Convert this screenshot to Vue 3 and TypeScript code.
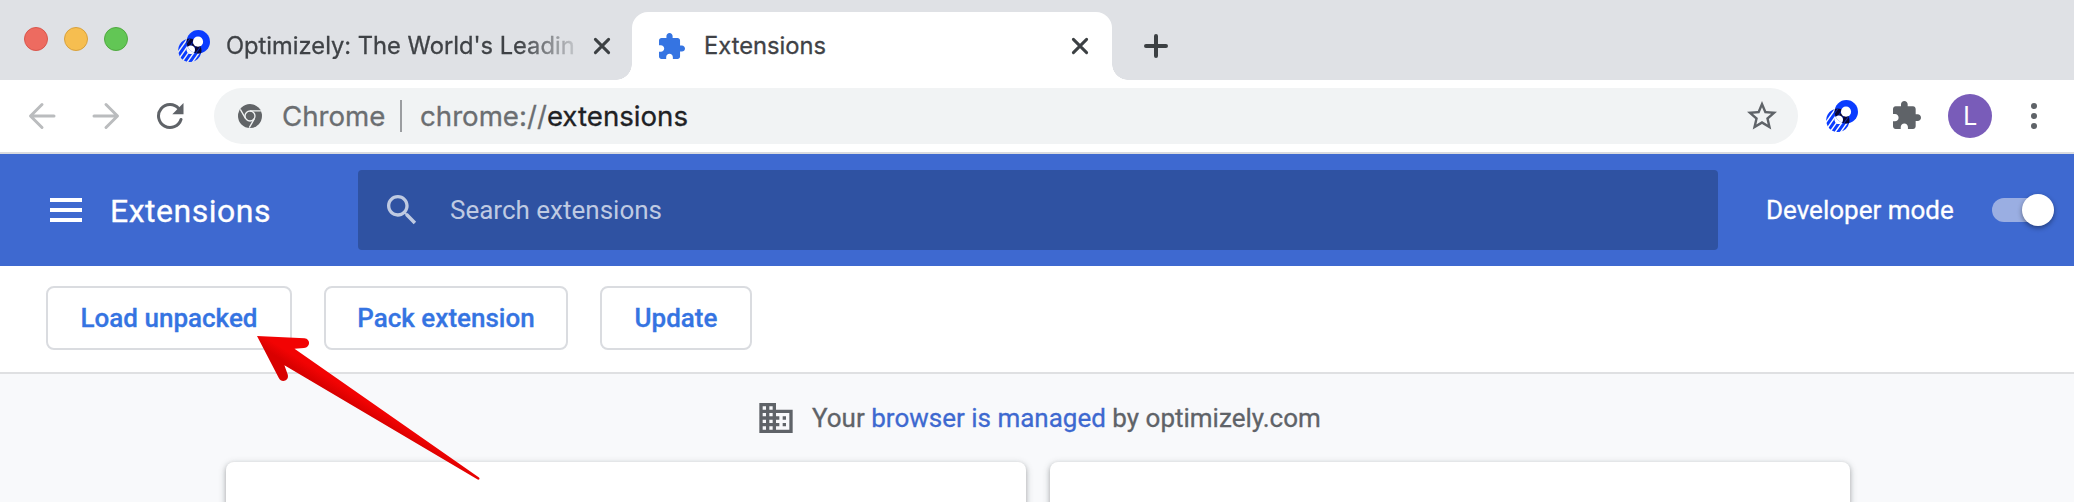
<script setup lang="ts">
import { h, type FunctionalComponent } from 'vue'

const puzzlePath =
  'M20.5 11H19V7c0-1.1-.9-2-2-2h-4V3.5C13 2.12 11.88 1 10.5 1S8 2.12 8 3.5V5H4c-1.1 0-1.99.9-1.99 2v3.8H3.5c1.49 0 2.7 1.21 2.7 2.7s-1.21 2.7-2.7 2.7H2V20c0 1.1.9 2 2 2h3.8v-1.5c0-1.49 1.21-2.7 2.7-2.7 1.49 0 2.7 1.21 2.7 2.7V22H17c1.1 0 2-.9 2-2v-4h1.5c1.38 0 2.5-1.12 2.5-2.5S21.88 11 20.5 11z'

const stripes = [-9, -4.6, -0.2, 4.2, 8.6, 13, 17.4, 21.8]

// Comet logo: a solid ring over a diagonally striped one
const CometLogo: FunctionalComponent<{ uid: string }> = ({ uid }) =>
  h('svg', { width: 32, height: 32, viewBox: '0 0 32 32' }, [
    h('defs', [
      h('clipPath', { id: `${uid}-tail` }, [
        h('path', {
          'clip-rule': 'evenodd',
          d: 'M11.8 8.6a11.7 11.7 0 1 0 .01 0zM12.8 15.6a4.2 4.2 0 1 1-.01 0z',
        }),
      ]),
      h('clipPath', { id: `${uid}-head` }, [h('circle', { cx: 20.3, cy: 11.7, r: 11.7 })]),
    ]),
    h('g', { 'clip-path': `url(#${uid}-tail)` }, [
      h('rect', { width: 32, height: 32, fill: '#fff', opacity: 0.55 }),
      h('g', { transform: 'rotate(35 12 20)' }, stripes.map((x) =>
        h('rect', { x, y: -6, width: 3, height: 50, fill: '#0a3cff' }))),
    ]),
    h('circle', { cx: 12.8, cy: 19.8, r: 4.2, fill: '#fff', opacity: 0.7 }),
    h('circle', { cx: 20.3, cy: 11.7, r: 11.7, fill: '#0a3cff' }),
    h('g', { 'clip-path': `url(#${uid}-head)` }, [
      h('g', { 'clip-path': `url(#${uid}-tail)` }, [
        h('rect', { width: 32, height: 32, fill: '#080736' }),
        h('g', { transform: 'rotate(35 12 20)' }, stripes.map((x) =>
          h('rect', { x: x + 0.8, y: -6, width: 0.9, height: 50, fill: '#0b2bc0' }))),
      ]),
      h('circle', { cx: 12.8, cy: 19.8, r: 4.2, fill: '#fff' }),
    ]),
    h('circle', { cx: 20, cy: 11.7, r: 5.1, fill: '#fff' }),
  ])
CometLogo.props = ['uid']

const lights = ['red', 'yellow', 'green']
const actions = [
  { label: 'Load unpacked', cls: 'load' },
  { label: 'Pack extension', cls: 'pack' },
  { label: 'Update', cls: 'update' },
]
</script>

<template>
  <div class="window">
    <div class="tabstrip">
      <div class="lights"><span v-for="c in lights" :key="c" class="light" :class="c" /></div>
      <div class="tab inactive">
        <CometLogo uid="tab" />
        <span class="tab-title faded">Optimizely: The World's Leadin</span>
        <svg class="close" width="20" height="20" viewBox="0 0 20 20"><path d="M3.4 3.4l13.2 13.2M16.6 3.4L3.4 16.6" /></svg>
      </div>
      <div class="tab active">
        <svg class="tab-puzzle" width="26" height="26" viewBox="2 1 21 21"><path :d="puzzlePath" /></svg>
        <span class="tab-title">Extensions</span>
        <svg class="close" width="20" height="20" viewBox="0 0 20 20"><path d="M3.4 3.4l13.2 13.2M16.6 3.4L3.4 16.6" /></svg>
      </div>
      <svg class="plus" width="24" height="24" viewBox="0 0 24 24"><path d="M12 2v20M2 12h20" /></svg>
    </div>

    <div class="toolbar">
      <svg class="nav back" width="28" height="28" viewBox="0 0 28 28"><path d="M26 14H3M14 2.5L2.5 14 14 25.5" /></svg>
      <svg class="nav forward" width="28" height="28" viewBox="0 0 28 28"><path d="M2 14h23M14 2.5L25.5 14 14 25.5" /></svg>
      <svg class="reload" width="28" height="28" viewBox="0 0 28 28">
        <path class="arc" d="M25 17.5A11.5 11.5 0 1 1 22.8 6.6" />
        <path class="head" d="M27.5 1v11.2H16.3z" />
      </svg>
      <div class="omnibox">
        <svg class="chrome-icon" width="24" height="24" viewBox="0 0 24 24">
          <circle cx="12" cy="12" r="12" fill="#616467" />
          <circle cx="12" cy="12" r="5" fill="none" stroke="#f1f3f4" stroke-width="1.3" />
          <path d="M12 6.9h10.9M7.6 14.6L2.3 5.4M16.4 14.6L11.3 23.6" stroke="#f1f3f4" stroke-width="1.3" fill="none" />
        </svg>
        <span class="scheme-name">Chrome</span>
        <span class="sep" />
        <span class="url">chrome://<b>extensions</b></span>
        <svg class="star" width="36" height="36" viewBox="0 0 24 24"><path d="M22 9.24l-7.19-.62L12 2 9.19 8.63 2 9.24l5.46 4.73L5.82 21 12 17.27 18.18 21l-1.63-7.03L22 9.24zM12 15.4l-3.76 2.27 1-4.28-3.32-2.88 4.38-.38L12 6.1l1.71 4.04 4.38.38-3.32 2.88 1 4.28L12 15.4z" /></svg>
      </div>
      <CometLogo uid="bar" />
      <svg class="bar-puzzle" width="28" height="28" viewBox="2 1 21 21"><path :d="puzzlePath" /></svg>
      <span class="avatar">L</span>
      <svg class="dots" width="6" height="26" viewBox="0 0 6 26"><circle cx="3" cy="3" r="3" /><circle cx="3" cy="13" r="3" /><circle cx="3" cy="23" r="3" /></svg>
    </div>

    <header class="header">
      <svg class="menu" width="32" height="24" viewBox="0 0 32 24"><path d="M0 0h32v4H0zM0 10h32v4H0zM0 20h32v4H0z" /></svg>
      <h1>Extensions</h1>
      <div class="search">
        <svg width="40" height="40" viewBox="0 0 24 24"><path d="M15.5 14h-.79l-.28-.27C15.41 12.59 16 11.11 16 9.5 16 5.91 13.09 3 9.5 3S3 5.91 3 9.5 5.91 16 9.5 16c1.61 0 3.09-.59 4.23-1.57l.27.28v.79l5 4.99L20.49 19l-4.99-5zm-6 0C7.01 14 5 11.99 5 9.5S7.01 5 9.5 5 14 7.01 14 9.5 11.99 14 9.5 14z" /></svg>
        <span>Search extensions</span>
      </div>
      <span class="dev">Developer mode</span>
      <span class="toggle"><span class="knob" /></span>
    </header>

    <div class="actions">
      <button v-for="a in actions" :key="a.label" :class="a.cls"><span>{{ a.label }}</span></button>
      <svg class="pointer" width="240" height="160" viewBox="250 330 240 160">
        <defs>
          <linearGradient id="arrow-fill" gradientUnits="userSpaceOnUse" x1="325" y1="389" x2="332" y2="378">
            <stop offset="0.1" stop-color="#d90000" /><stop offset="0.9" stop-color="#f20303" />
          </linearGradient>
        </defs>
        <path fill="url(#arrow-fill)" d="M257 336l47.5 2.3c6.2.4 6.2 9.3-.5 9.7l-9.5.8L479 477.6c1.2 1.2.2 2.6-1.3 2L284.4 365.3l3.4 9.5c1.4 6.6-6.7 8.3-9 3.2z" />
      </svg>
    </div>

    <main>
      <div class="managed">
        <svg width="40" height="40" viewBox="0 0 24 24"><path d="M12 7V3H2v18h20V7H12zM6 19H4v-2h2v2zm0-4H4v-2h2v2zm0-4H4V9h2v2zm0-4H4V5h2v2zm4 12H8v-2h2v2zm0-4H8v-2h2v2zm0-4H8V9h2v2zm0-4H8V5h2v2zm10 12h-8v-2h2v-2h-2v-2h2v-2h-2V9h8v10zm-2-8h-2v2h2v-2zm0 4h-2v2h2v-2z" /></svg>
        <span>Your <a>browser is managed</a> by optimizely.com</span>
      </div>
      <div class="cards"><div class="card" /><div class="card" /></div>
    </main>
  </div>
</template>

<style>
html, body { margin: 0; overflow: hidden; }
</style>

<style scoped>
* { box-sizing: border-box; }
svg { display: block; flex: none; }
.window { width: 2074px; height: 502px; overflow: hidden; background: #f8f9fb; font-family: Roboto, "Liberation Sans", sans-serif; white-space: nowrap; -webkit-text-stroke: 0.3px currentColor; }
.tabstrip { display: flex; height: 80px; background: #dfe1e5; }
.lights { display: flex; gap: 16px; padding: 27px 0 0 24px; width: 162px; flex: none; }
.light { width: 24px; height: 24px; border-radius: 50%; border: 1px solid; }
.red { background: #ed6b60; border-color: #d9564c; }
.yellow { background: #f6be50; border-color: #d8a13d; }
.green { background: #62c655; border-color: #50a940; }
.tab { display: flex; align-items: center; height: 68px; margin-top: 12px; flex: none; position: relative; }
.inactive { width: 470px; padding-left: 16px; }
.active { width: 480px; padding-left: 27px; background: #fff; border-radius: 16px 16px 0 0; }
.active::before, .active::after { content: ''; position: absolute; bottom: 0; width: 16px; height: 16px; }
.active::before { left: -16px; background: radial-gradient(circle at 0 0, transparent 15.5px, #fff 16px); }
.active::after { right: -16px; background: radial-gradient(circle at 100% 0, transparent 15.5px, #fff 16px); }
.tab-title { font-family: Inter, "Liberation Sans", sans-serif; font-size: 23.7px; line-height: 30px; color: #3f4246; margin-left: 16px; width: 350px; overflow: hidden; }
.active .tab-title { margin-left: 19px; width: 366px; }
.faded { -webkit-mask-image: linear-gradient(90deg, #000 84%, transparent 103%); mask-image: linear-gradient(90deg, #000 84%, transparent 103%); }
.close { margin-left: auto; margin-right: 20px; fill: none; stroke: #3c4043; stroke-width: 3; stroke-linecap: round; }
.active .close { margin-right: 22px; }
.tab-puzzle { fill: #3574e2; }
.plus { margin: 34px 0 0 32px; fill: none; stroke: #3c4043; stroke-width: 4; stroke-linecap: round; }
.toolbar { display: flex; align-items: center; height: 74px; background: #fff; border-bottom: 2px solid #d9dbdf; }
.nav { fill: none; stroke: #babcbe; stroke-width: 3; stroke-linecap: round; stroke-linejoin: round; }
.back { margin-left: 28px; }
.forward { margin-left: 36px; }
.reload { margin-left: 36px; }
.arc { fill: none; stroke: #5f6368; stroke-width: 3; stroke-linecap: round; }
.head { fill: #5f6368; }
.omnibox { display: flex; align-items: center; width: 1584px; height: 56px; margin: 0 28px 0 30px; padding-left: 24px; border-radius: 28px; background: #f1f3f4; font-family: Inter, "Liberation Sans", sans-serif; font-size: 27.65px; line-height: 40px; flex: none; color: #6b6e71; }
.scheme-name { margin-left: 20px; width: 118px; }
.sep { width: 2px; height: 32px; background: #9b9da0; }
.url { margin-left: 18px; }
.url b { font-weight: 400; color: #202124; }
.star { margin-left: auto; margin-right: 18px; fill: #5f6368; }
.bar-puzzle { margin-left: 35px; margin-top: -2px; fill: #5f6368; }
.avatar { width: 44px; height: 44px; margin-left: 27px; border-radius: 50%; background: #795cb9; color: #fff; font-size: 25px; line-height: 45px; text-align: center; flex: none; -webkit-text-stroke: 0; }
.dots { margin-left: 39px; fill: #5f6368; }
.header { display: flex; align-items: center; height: 112px; background: #3e69d0; color: #fff; }
.menu { margin-left: 50px; fill: #fff; }
h1 { margin: 0 0 0 28px; padding-top: 1px; width: 248px; font-size: 32px; letter-spacing: .5px; font-weight: 400; line-height: 40px; }
.search { display: flex; align-items: center; width: 1360px; height: 80px; padding-left: 24px; border-radius: 4px; background: #2f52a2; color: #bfcae2; font-size: 26px; line-height: 32px; flex: none; -webkit-text-stroke: 0; }
.search svg { fill: #bfcae2; }
.search span { margin-left: 28px; }
.dev { margin-left: 48px; width: 226px; font-size: 26px; line-height: 32px; flex: none; }
.toggle { width: 56px; height: 24px; border-radius: 12px; background: #9aaee2; position: relative; flex: none; }
.knob { position: absolute; right: -6px; top: -4px; width: 32px; height: 32px; border-radius: 50%; background: #fff; box-shadow: 0 2px 5px rgba(0,0,0,.4); }
.actions { position: relative; display: flex; align-items: flex-start; gap: 32px; height: 108px; padding: 20px 0 0 46px; background: #fff; border-bottom: 2px solid #dfe0e2; }
button { height: 64px; padding: 0; border: 2px solid #dadce0; border-radius: 8px; background: #fff; color: #3574e2; font-family: Roboto, "Liberation Sans", sans-serif; font-size: 26px; font-weight: 500; line-height: 32px; -webkit-text-stroke: 0.3px currentColor; }
.load { width: 246px; }
.pack { width: 244px; }
.update { width: 152px; }
.pointer { position: absolute; left: 250px; top: 64px; z-index: 2; }
.managed { display: flex; align-items: center; height: 88px; padding-left: 756px; color: #5f6368; font-size: 26px; line-height: 32px; }
.managed svg { fill: #5f6368; }
.managed span { margin-left: 16px; }
.managed a { color: #3e69d0; }
.cards { display: flex; gap: 24px; padding-left: 226px; }
.card { width: 800px; height: 200px; border-radius: 8px; background: #fff; box-shadow: 0 2px 4px rgba(60,64,67,.3), 0 2px 6px 2px rgba(60,64,67,.15); flex: none; }
</style>
